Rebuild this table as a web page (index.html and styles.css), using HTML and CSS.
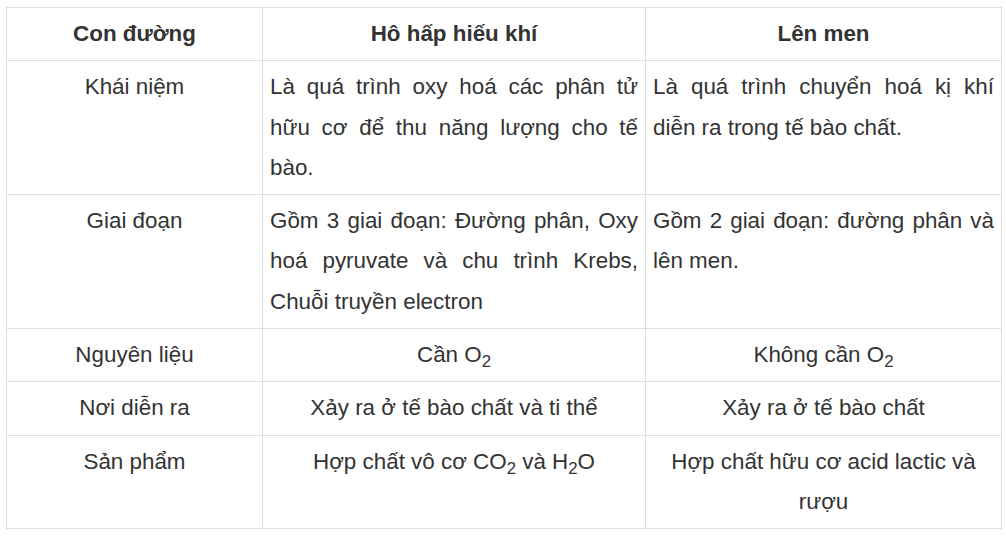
FILE: index.html
```html
<!DOCTYPE html>
<html lang="vi">
<head>
<meta charset="utf-8">
<title>So sánh hô hấp hiếu khí và lên men</title>
<link rel="stylesheet" href="styles.css">
</head>
<body>
<table class="cmp">
  <colgroup>
    <col class="c1">
    <col class="c2">
    <col class="c3">
  </colgroup>
  <thead>
    <tr>
      <th>Con đường</th>
      <th>Hô hấp hiếu khí</th>
      <th>Lên men</th>
    </tr>
  </thead>
  <tbody>
    <tr>
      <td class="center">Khái niệm</td>
      <td class="just">Là quá trình oxy hoá các phân tử hữu cơ để thu năng lượng cho tế bào.</td>
      <td class="just">Là quá trình chuyển hoá kị khí diễn ra trong tế bào chất.</td>
    </tr>
    <tr>
      <td class="center">Giai đoạn</td>
      <td class="just">Gồm 3 giai đoạn: Đường phân, Oxy hoá pyruvate và chu trình Krebs, Chuỗi truyền electron</td>
      <td class="just">Gồm 2 giai đoạn: đường phân và lên men.</td>
    </tr>
    <tr>
      <td class="center">Nguyên liệu</td>
      <td class="center">Cần O<sub>2</sub></td>
      <td class="center">Không cần O<sub>2</sub></td>
    </tr>
    <tr>
      <td class="center">Nơi diễn ra</td>
      <td class="center">Xảy ra ở tế bào chất và ti thể</td>
      <td class="center">Xảy ra ở tế bào chất</td>
    </tr>
    <tr>
      <td class="center">Sản phẩm</td>
      <td class="center">Hợp chất vô cơ CO<sub>2</sub> và H<sub>2</sub>O</td>
      <td class="center">Hợp chất hữu cơ acid lactic và rượu</td>
    </tr>
  </tbody>
</table>
</body>
</html>
```
FILE: styles.css
```css
html, body {
  margin: 0;
  padding: 0;
  background: #ffffff;
}

body {
  font-family: "Liberation Sans", Arial, sans-serif;
  color: #333333;
  padding: 7px 0 0 6px;
}

.cmp {
  border-collapse: collapse;
  width: 995px;
  table-layout: fixed;
  font-size: 22.4px;
  line-height: 40.3px;
}

.c1 { width: 256px; }
.c2 { width: 383px; }
.c3 { width: 356px; }

.cmp th,
.cmp td {
  border: 1px solid #dddddd;
  padding: 6px 7px 6px 7px;
  vertical-align: top;
}

.cmp th {
  font-weight: bold;
  text-align: center;
}

.center { text-align: center; }

.just { text-align: justify; }

sub {
  font-size: 75%;
  line-height: 0;
  vertical-align: -0.3em;
}
```
